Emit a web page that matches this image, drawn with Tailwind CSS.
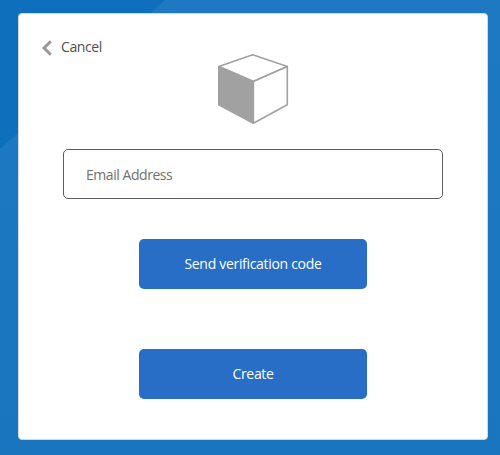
<!DOCTYPE html>
<html lang="en">
<head>
<meta charset="utf-8">
<title>Create account</title>
<script src="https://cdn.jsdelivr.net/npm/@tailwindcss/browser@4"></script>
</head>
<body class="h-[455px] overflow-hidden bg-linear-to-b from-[#1e79c2] to-[#1875be] font-['Open_Sans','Noto_Sans',sans-serif] text-sm">
<svg class="absolute left-0 top-0 -z-10" width="166" height="150" viewBox="0 0 166 150"><path d="M0 0H165L0 149Z" fill="#0e6fbd"/></svg>
<main class="ml-[18px] mt-[13px] flex h-[427px] w-[470px] flex-col rounded-[4px] border border-[#d6d6d6] bg-white px-[23px] pt-[24px]">
  <div class="flex h-[15px] shrink-0 items-start">
    <a href="#" class="flex items-center leading-[18px] text-[#505050]">
      <svg class="mt-[2px]" width="10" height="16" viewBox="0 0 10 16" fill="none" stroke="#999" stroke-width="3"><path d="M8.8 1.2L2.1 8L8.8 14.8"/></svg>
      <span class="ml-[9px] tracking-[-0.4px]">Cancel</span>
    </a>
  </div>
  <svg class="ml-[175px] shrink-0" width="72" height="72" viewBox="0 0 72 72" stroke="#a1a1a1" stroke-width="1.6" stroke-linejoin="round">
    <path d="M1.8 13.6L35.7 1.8L70.3 13.4L36.4 28.4Z" fill="#fff"/>
    <path d="M1.8 13.6L36.4 28.4V70.2L1.8 51.7Z" fill="#a1a1a1"/>
    <path d="M36.4 28.4L70.3 13.4V51.7L36.4 70.2Z" fill="#fff"/>
  </svg>
  <input type="text" aria-label="Email Address" placeholder="Email Address" class="ml-[21px] mt-[24px] h-[50px] w-[380px] shrink-0 rounded-[5px] border border-[#5c5c5c] px-[22px] tracking-[-0.45px] placeholder:text-[#707070]">
  <button class="ml-[97px] mt-10 h-[50px] w-[228px] shrink-0 rounded-[5px] bg-[#286ec6] tracking-[-0.31px] text-white">Send verification code</button>
  <button class="ml-[97px] mt-[60px] h-[50px] w-[228px] shrink-0 rounded-[5px] bg-[#286ec6] tracking-[-0.31px] text-white">Create</button>
</main>
</body>
</html>
